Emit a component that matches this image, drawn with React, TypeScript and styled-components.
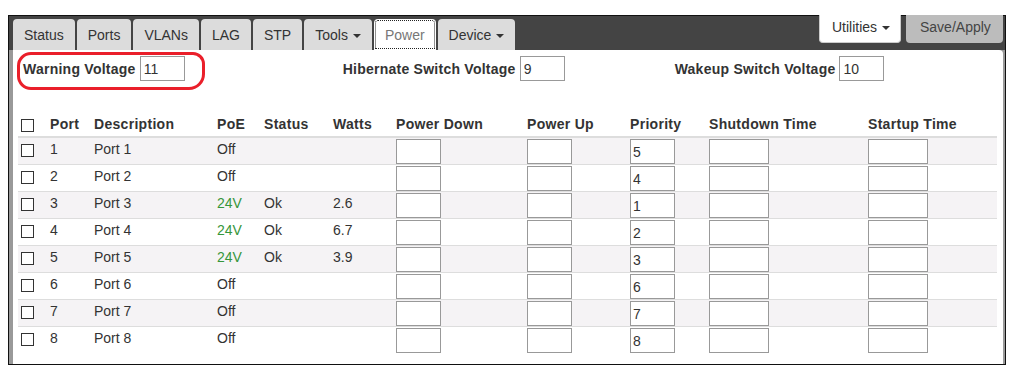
import React from 'react'
import styled, { createGlobalStyle } from 'styled-components'

const GlobalStyle = createGlobalStyle`
  body {
    margin: 0;
    background: #fff;
    font-family: 'Liberation Sans', Arial, sans-serif;
    font-size: 14px;
    color: #333;
  }
`

interface PortRow {
  port: number,
  poe: string,
  status?: string,
  watts?: string,
  priority: string,
}

const rows: PortRow[] = [
  { port: 1, poe: 'Off', priority: '5' },
  { port: 2, poe: 'Off', priority: '4' },
  { port: 3, poe: '24V', status: 'Ok', watts: '2.6', priority: '1' },
  { port: 4, poe: '24V', status: 'Ok', watts: '6.7', priority: '2' },
  { port: 5, poe: '24V', status: 'Ok', watts: '3.9', priority: '3' },
  { port: 6, poe: 'Off', priority: '6' },
  { port: 7, poe: 'Off', priority: '7' },
  { port: 8, poe: 'Off', priority: '8' },
]

const tabs = [
  { label: 'Status' },
  { label: 'Ports' },
  { label: 'VLANs' },
  { label: 'LAG' },
  { label: 'STP' },
  { label: 'Tools', menu: true },
  { label: 'Power', active: true },
  { label: 'Device', menu: true },
]

const colWidths = [32, 44, 123, 47, 69, 63, 131, 103, 79, 159, 129]

const App: React.FC = () => {
  return (
    <>
      <GlobalStyle />
      <Frame>
        <TopBar>
          <Tabs>
            {tabs.map(t => (
              <Tab key={t.label} $active={t.active}>
                {t.label}{t.menu && <Caret />}
              </Tab>
            ))}
          </Tabs>
          <Actions>
            <UtilButton>Utilities<Caret /></UtilButton>
            <SaveButton>Save/Apply</SaveButton>
          </Actions>
        </TopBar>
        <Body>
          <Panel>
            <VoltageRow>
              <Highlight>
                <FieldLabel>Warning Voltage</FieldLabel>
                <SmallInput defaultValue="11" />
              </Highlight>
              <Field $offset={138}>
                <FieldLabel>Hibernate Switch Voltage</FieldLabel>
                <SmallInput defaultValue="9" />
              </Field>
              <Field $offset={110}>
                <FieldLabel>Wakeup Switch Voltage</FieldLabel>
                <SmallInput defaultValue="10" />
              </Field>
            </VoltageRow>

            <PortTable>
              <colgroup>
                {colWidths.map((w, i) => <col key={i} style={{ width: w }} />)}
              </colgroup>
              <thead>
                <tr>
                  <Th><Check type="checkbox" /></Th>
                  <Th>Port</Th>
                  <Th>Description</Th>
                  <Th>PoE</Th>
                  <Th>Status</Th>
                  <Th>Watts</Th>
                  <Th>Power Down</Th>
                  <Th>Power Up</Th>
                  <Th>Priority</Th>
                  <Th>Shutdown Time</Th>
                  <Th>Startup Time</Th>
                </tr>
              </thead>
              <tbody>
                {rows.map(r => (
                  <Row key={r.port} $striped={r.port % 2 === 1}>
                    <Td><Check type="checkbox" /></Td>
                    <Td>{r.port}</Td>
                    <Td>Port {r.port}</Td>
                    <Td $green={r.poe === '24V'}>{r.poe}</Td>
                    <Td>{r.status}</Td>
                    <Td>{r.watts}</Td>
                    <InputCell><CellInput $width={45} /></InputCell>
                    <InputCell><CellInput $width={45} /></InputCell>
                    <InputCell><CellInput $width={45} defaultValue={r.priority} /></InputCell>
                    <InputCell><CellInput $width={60} /></InputCell>
                    <InputCell><CellInput $width={60} /></InputCell>
                  </Row>
                ))}
              </tbody>
            </PortTable>
          </Panel>
        </Body>
      </Frame>
    </>
  )
}

const Frame = styled.div`
  box-sizing: border-box;
  width: 998px;
  margin: 15px 0 0 8px;
  border: 1px solid #111;
  background: #999;
`

const TopBar = styled.div`
  display: flex;
  justify-content: space-between;
  height: 34px;
  padding: 3px 2px 0 4px;
  box-sizing: border-box;
  background: #444;
`

const Tabs = styled.div`
  display: flex;
  gap: 2px;
`

const Tab = styled.div<{ $active?: boolean }>`
  display: flex;
  align-items: flex-start;
  height: 31px;
  box-sizing: border-box;
  padding: 8px 11px 0;
  line-height: 16px;
  border-radius: 4px 4px 0 0;
  background: ${p => (p.$active ? '#fff' : '#dcdcdc')};
  color: ${p => (p.$active ? '#777' : '#333')};
  outline: ${p => (p.$active ? '1px dotted #222' : 'none')};
  outline-offset: -2px;
`

const Caret = styled.span`
  display: inline-block;
  width: 0;
  height: 0;
  margin: 7px 0 0 5px;
  border-top: 4px solid #333;
  border-left: 4px solid transparent;
  border-right: 4px solid transparent;
`

const Actions = styled.div`
  display: flex;
  gap: 5px;
  margin-top: -4px;
`

const UtilButton = styled.div`
  display: flex;
  align-items: flex-start;
  height: 28px;
  width: 82px;
  box-sizing: border-box;
  padding: 4px 0 0 12px;
  line-height: 16px;
  background: #fff;
  border: 1px solid #ccc;
  border-top: none;
  border-radius: 0 0 4px 4px;
  color: #333;
`

const SaveButton = styled.div`
  height: 28px;
  width: 97px;
  box-sizing: border-box;
  padding: 4px 0 0 14px;
  line-height: 16px;
  background: #bcbcbc;
  border-radius: 0 0 4px 4px;
  color: #444;
`

const Body = styled.div`
  padding: 0 2px 0 4px;
`

const Panel = styled.div`
  background: #fff;
  border-radius: 0 4px 0 0;
  padding: 2px 5px 11px;
`

const VoltageRow = styled.div`
  display: flex;
  align-items: flex-start;
`

const Highlight = styled.div`
  display: flex;
  align-items: center;
  gap: 4px;
  margin-left: -1px;
  padding: 1px 17px 6px 3px;
  border: 3px solid #ea1f2a;
  border-radius: 14px 12px 16px 14px;
`

const Field = styled.div<{ $offset: number }>`
  display: flex;
  align-items: center;
  gap: 4px;
  margin: 4px 0 0 ${p => p.$offset}px;
`

const FieldLabel = styled.span`
  font-weight: 700;
  letter-spacing: 0.25px;
  color: #333;
`

const SmallInput = styled.input`
  box-sizing: border-box;
  width: 45px;
  height: 25px;
  padding: 0 3px;
  border: 1px solid #999;
  font: 14px 'Liberation Sans', Arial, sans-serif;
  color: #333;
  outline: none;
`

const PortTable = styled.table`
  width: 979px;
  margin-top: 23px;
  table-layout: fixed;
  border-collapse: separate;
  border-spacing: 0;

  tbody tr + tr > td {
    border-top: 1px solid #ddd;
  }
`

const Th = styled.th`
  padding: 3px 0 4px;
  line-height: 16px;
  text-align: left;
  font-weight: 700;
  letter-spacing: 0.3px;
  color: #333;
  border-bottom: 2px solid #ddd;
  vertical-align: top;
`

const Row = styled.tr<{ $striped: boolean }>`
  background: ${p => (p.$striped ? '#f5f3f5' : '#fff')};
`

const Td = styled.td<{ $green?: boolean }>`
  padding: 3px 0 0;
  line-height: 16px;
  vertical-align: top;
  color: ${p => (p.$green ? '#35963a' : '#333')};
`

const InputCell = styled.td`
  padding: 1px 0 0;
  vertical-align: top;
`

const CellInput = styled.input<{ $width: number }>`
  display: block;
  box-sizing: border-box;
  width: ${p => p.$width}px;
  height: 25px;
  padding: 0 2px;
  border: 1px solid #999;
  font: 14px 'Liberation Sans', Arial, sans-serif;
  color: #333;
  background: #fff;
  outline: none;
`

const Check = styled.input`
  appearance: none;
  display: block;
  width: 13px;
  height: 13px;
  margin: 3px 0 0 3px;
  border: 1px solid #333;
  border-radius: 0;
  background: #fff;
`

export default App
